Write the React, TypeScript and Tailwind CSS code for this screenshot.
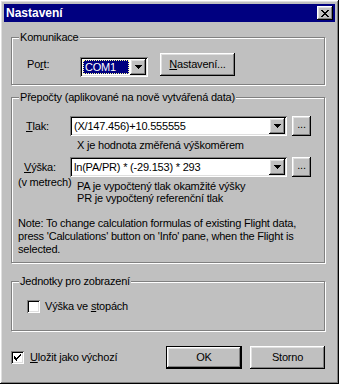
import { ReactNode } from "react";

const raised =
  "shadow-[inset_-1px_-1px_#000,inset_1px_1px_#fff,inset_-2px_-2px_#808080,inset_2px_2px_#dfdfdf]";
const sunken =
  "shadow-[inset_1px_1px_#808080,inset_-1px_-1px_#fff,inset_2px_2px_#000,inset_-2px_-2px_#dfdfdf]";

function Arrow() {
  return (
    <svg width="7" height="4" viewBox="0 0 7 4">
      <path d="M0 0h7v1H0zM1 1h5v1H1zM2 2h3v1H2zM3 3h1v1H3z" fill="#000" />
    </svg>
  );
}

function Combo({ width, children, selected }: { width: string; children: ReactNode; selected?: boolean }) {
  return (
    <div className={`flex h-[20px] shrink-0 bg-white p-[2px] ${sunken} ${width}`}>
      <div className="flex min-w-0 flex-1 items-center p-[1px]">
        {selected ? (
          <div className="flex h-full flex-1 items-center border border-dotted border-[#ffffa0] bg-[#000080] pl-[1px] text-white">
            {children}
          </div>
        ) : (
          <div className="flex h-full flex-1 items-center whitespace-nowrap pl-[1px]">{children}</div>
        )}
      </div>
      <div className={`flex w-[16px] shrink-0 items-center justify-center bg-[#c0c0c0] ${raised}`}>
        <Arrow />
      </div>
    </div>
  );
}

function Group({ label, height, className, children }: { label: string; height: string; className?: string; children: ReactNode }) {
  return (
    <div
      className={`relative border border-[#808080] shadow-[inset_1px_1px_#fff,1px_1px_#fff] ${height} ${className ?? ""}`}
    >
      <span className="absolute left-[7px] top-[-7px] whitespace-nowrap bg-[#c0c0c0] px-[1px] leading-[13px]">{label}</span>
      {children}
    </div>
  );
}

function Checkbox({ checked }: { checked?: boolean }) {
  return (
    <div className={`flex h-[13px] w-[13px] shrink-0 items-center justify-center bg-white ${sunken}`}>
      {checked && (
        <svg width="7" height="7" viewBox="0 0 7 7">
          <path d="M6 0h1v1H6zM5 1h1v1H5zM0 2h1v3H0zM4 2h1v1H4zM1 3h1v3H1zM3 3h1v1H3zM2 4h1v3H2zM5 1h1v2H5zM6 0h1v2H6zM4 2h1v2H4zM3 3h1v2H3z" fill="#000" />
        </svg>
      )}
    </div>
  );
}

export default function App() {
  return (
    <div
      className={`flex h-[384px] w-[339px] flex-col bg-[#c0c0c0] p-[4px] font-['Liberation_Sans',Arial,sans-serif] text-[11px] leading-[13px] tracking-[-0.2px] text-black ${raised}`}
    >
      <div className="flex h-[18px] shrink-0 items-center justify-between bg-[#000080] pl-[2px] pr-[2px]">
        <span className="text-[12px] font-bold tracking-normal text-white">Nastavení</span>
        <div className={`flex h-[14px] w-[16px] items-center justify-center bg-[#c0c0c0] ${raised}`}>
          <svg width="8" height="7" viewBox="0 0 8 7">
            <path d="M0 0h2v1H0zM6 0h2v1H6zM1 1h2v1H1zM5 1h2v1H5zM2 2h4v1H2zM3 3h2v1H3zM2 4h4v1H2zM1 5h2v1H1zM5 5h2v1H5zM0 6h2v1H0zM6 6h2v1H6z" fill="#000" />
          </svg>
        </div>
      </div>

      <div className="flex flex-1 flex-col pl-[7px] pr-[10px]">
        <Group label="Komunikace" height="h-[48px]" className="mt-[15px]">
          <div className="flex items-start pl-[15px] pt-[15px]">
            <span className="mt-[5px] w-[53px]">
              Po<span className="underline">r</span>t:
            </span>
            <div className="mt-[4px]">
              <Combo width="w-[68px]" selected>
                COM1
              </Combo>
            </div>
            <button className={`ml-[12px] flex h-[23px] w-[75px] items-center justify-center bg-[#c0c0c0] ${raised}`}>
              <span className="underline">N</span>astavení...
            </button>
          </div>
        </Group>

        <Group label="Přepočty (aplikované na nově vytvářená data)" height="h-[166px]" className="mt-[12px]">
          <div className="flex flex-col pt-[18px]">
            <div className="flex items-center">
              <span className="w-[58px] pl-[14px]">
                <span className="underline">T</span>lak:
              </span>
              <Combo width="w-[217px]">(X/147.456)+10.555555</Combo>
              <button className={`ml-[5px] flex h-[20px] w-[19px] items-center justify-center bg-[#c0c0c0] pb-[3px] ${raised}`}>
                ...
              </button>
            </div>
            <div className="mt-[3px] pl-[65px]">X je hodnota změřená výškoměrem</div>
            <div className="mt-[5px] flex items-start">
              <div className="flex w-[58px] shrink-0 flex-col">
                <span className="mt-[4px] pl-[12px]">
                  <span className="underline">V</span>ýška:
                </span>
                <span className="mt-[2px] whitespace-nowrap pl-[6px]">(v metrech)</span>
              </div>
              <div className="flex flex-col">
                <div className="flex items-center">
                  <Combo width="w-[217px]">ln(PA/PR) * (-29.153) * 293</Combo>
                  <button className={`ml-[5px] flex h-[20px] w-[19px] items-center justify-center bg-[#c0c0c0] pb-[3px] ${raised}`}>
                    ...
                  </button>
                </div>
                <div className="mt-[3px] pl-[7px] leading-[12px]">PA je vypočtený tlak okamžité výšky</div>
                <div className="pl-[7px] leading-[12px]">PR je vypočtený referenční tlak</div>
              </div>
            </div>
            <div className="mt-[13px] pl-[6px] pr-[8px]">
              Note: To change calculation formulas of existing Flight data,
              <br />
              press 'Calculations' button on 'Info' pane, when the Flight is
              <br />
              selected.
            </div>
          </div>
        </Group>

        <Group label="Jednotky pro zobrazení" height="h-[50px]" className="mt-[18px]">
          <div className="flex items-center gap-[5px] pl-[15px] pt-[18px]">
            <Checkbox />
            <span>
              Výška ve <span className="underline">s</span>topách
            </span>
          </div>
        </Group>

        <div className="mt-[15px] flex items-center">
          <Checkbox checked />
          <span className="ml-[6px]">
            <span className="underline">U</span>ložit jako výchozí
          </span>
          <div className="ml-auto flex gap-[8px]">
            <button className="h-[23px] w-[76px] border border-black bg-[#c0c0c0]">
              <div className={`flex h-full w-full items-center justify-center ${raised}`}>OK</div>
            </button>
            <button className={`flex h-[23px] w-[75px] items-center justify-center bg-[#c0c0c0] ${raised}`}>
              Storno
            </button>
          </div>
        </div>
      </div>
    </div>
  );
}
